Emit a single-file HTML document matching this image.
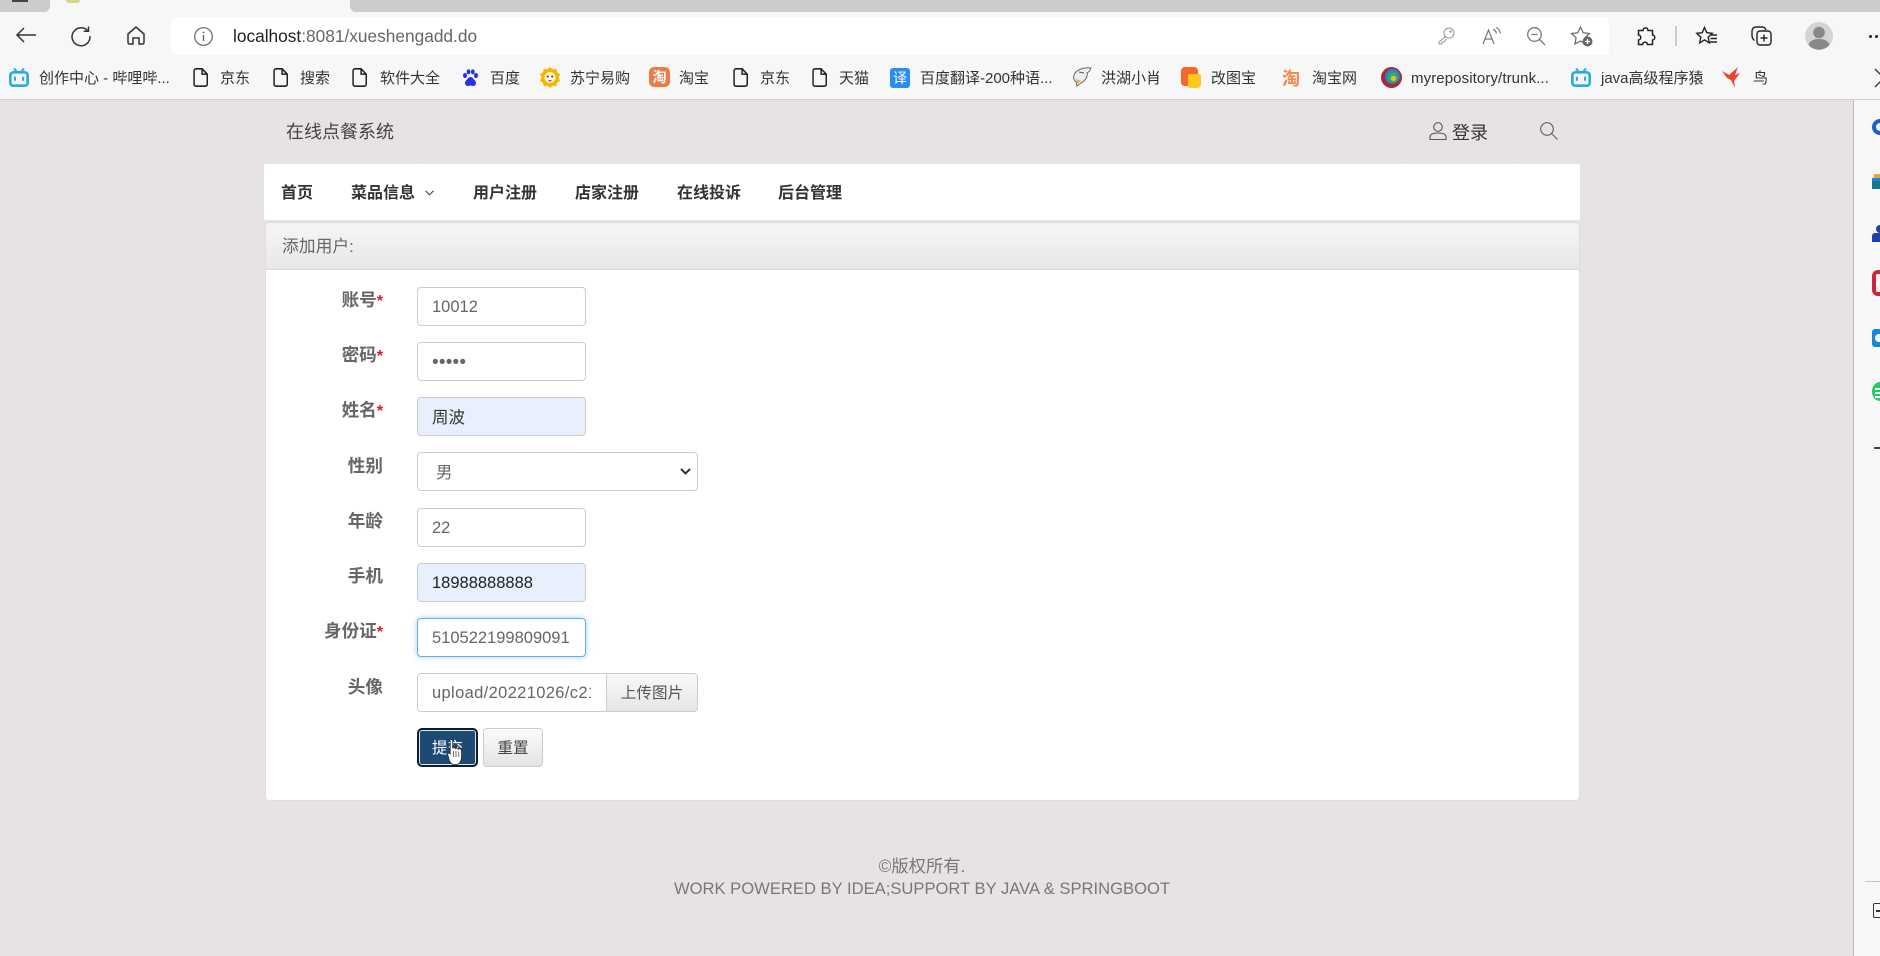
<!DOCTYPE html>
<html lang="zh-CN">
<head>
<meta charset="utf-8">
<title>添加用户</title>
<style>
html,body{margin:0;padding:0}
body{width:1880px;height:956px;overflow:hidden;position:relative;background:#e8e3e3;font-family:"Liberation Sans","Noto Sans CJK SC",sans-serif}
div,span,svg{box-sizing:border-box}
.a{position:absolute}
.t{position:absolute;white-space:nowrap;line-height:24px;height:24px}
.bm{font-size:15px;color:#333;top:67px}
.nav{font-size:16px;font-weight:700;color:#333;top:182px}
.lb{font-size:17.600px;font-weight:700;color:#666;text-align:right;right:1497px}
.lb i{color:#e8112d;font-style:normal;font-size:16px}
.in{position:absolute;left:417px;width:169px;height:39px;background:#fff;border:1px solid #ccc;border-radius:4px;font-size:16.500px;color:#666;line-height:39px;padding-left:14px;white-space:nowrap;overflow:hidden}
.sv{position:absolute;overflow:visible}
</style>
</head>
<body>
<!-- browser chrome -->
<div class="a" style="left:0;top:0;width:1880px;height:100px;background:#f7f7f7;border-bottom:1px solid #d2d0d0"></div>
<div class="a" style="left:350px;top:0;width:1530px;height:12px;background:#ccc;border-bottom-left-radius:6px"></div>
<div class="a" style="left:0;top:0;width:50px;height:12px;background:#ccc;border-bottom-right-radius:6px"></div>
<div class="a" style="left:12px;top:0;width:16px;height:1.500px;background:#444"></div>
<div class="a" style="left:66px;top:0;width:14px;height:3px;background:#d6d68a;border-radius:0 0 6px 6px"></div>
<div class="a" style="left:171px;top:17px;width:1438px;height:38px;background:#fff;border-radius:5px"></div>

<svg class="sv" style="left:16px;top:27px" width="20" height="16" viewBox="0 0 20 16" fill="none" stroke="#333" stroke-width="1.500"><path d="M20 8H1.500M8 1L1 8l7 7"/></svg>
<svg class="sv" style="left:71px;top:26px" width="20" height="20" viewBox="0 0 20 20" fill="none" stroke="#333" stroke-width="1.500"><path d="M16.500 4.500A9 9 0 1 0 19 10"/><path d="M17.500 0.500v4.800h-4.800"/></svg>
<svg class="sv" style="left:127px;top:26px" width="18" height="19" viewBox="0 0 18 19" fill="none" stroke="#333" stroke-width="1.500"><path d="M1 8L9 1l8 7v8.500a1.500 1.500 0 0 1-1.500 1.500H12v-6H6v6H2.500A1.500 1.500 0 0 1 1 16.500z"/></svg>
<svg class="sv" style="left:194px;top:27px" width="19" height="19" viewBox="0 0 19 19" fill="none" stroke="#666" stroke-width="1.200"><circle cx="9.500" cy="9.500" r="8.800"/><path d="M9.500 8v6" stroke-width="1.400"/><circle cx="9.500" cy="5.500" r=".9" fill="#666" stroke="none"/></svg>
<div class="t" style="left:233px;top:24px;font-size:17.300px;color:#222">localhost<span style="color:#666">:8081/xueshengadd.do</span></div>

<svg class="sv" style="left:1438px;top:27px" width="17" height="18" viewBox="0 0 17 18" fill="none" stroke="#999" stroke-width="1.100"><circle cx="11" cy="6" r="5"/><path d="M7.500 9.500L1 15v2h3v-2h2l2.500-3"/><circle cx="12.500" cy="4.500" r=".7" fill="#999"/></svg>
<svg class="sv" style="left:1482px;top:27px" width="20" height="18" viewBox="0 0 20 18" fill="none" stroke="#777" stroke-width="1.200"><path d="M1 17L6.500 3 12 17M3 12h7"/><path d="M11 2.500c2 .5 3 2 3.500 4M14 .5c2.500 1 4 3.500 4.500 6"/></svg>
<svg class="sv" style="left:1527px;top:27px" width="18" height="18" viewBox="0 0 18 18" fill="none" stroke="#777" stroke-width="1.300"><circle cx="7.500" cy="7.500" r="6.800"/><path d="M12.500 12.500L18 18M4.500 7.500h6"/></svg>
<svg class="sv" style="left:1571px;top:26px" width="22" height="21" viewBox="0 0 22 21" fill="none" stroke="#666" stroke-width="1.200"><path d="M9.500 1l2.700 5.700 6.300.8-4.600 4.300 1.200 6.200-5.600-3-5.600 3 1.200-6.200L.5 7.500l6.300-.8z"/><circle cx="16.500" cy="15.500" r="5" fill="#666" stroke="none"/><path d="M16.500 13v5M14 15.500h5" stroke="#fff"/></svg>
<svg class="sv" style="left:1636px;top:26px" width="20" height="20" viewBox="0 0 20 20" fill="none" stroke="#222" stroke-width="1.500"><path d="M7 4.500C7 1 12 1 12 4.500h4.500V9c3 0 3 5 0 5v4.500H11.500c0-3-5-3-5 0H2.500V14C5.500 14 5.500 9 2.500 9V4.500z"/></svg>
<div class="a" style="left:1675px;top:26px;width:2px;height:20px;background:#ccc"></div>
<svg class="sv" style="left:1696px;top:26px" width="22" height="20" viewBox="0 0 22 20" fill="none" stroke="#222" stroke-width="1.400"><path d="M8.500 1.500l2.300 5.200 5.400.6-4 3.800 1.100 5.700-4.800-2.900-4.800 2.900 1.100-5.700-4-3.800 5.400-.6zM15 9h6M14.500 12.500h6.500M14 16h7"/></svg>
<svg class="sv" style="left:1751px;top:26px" width="21" height="20" viewBox="0 0 21 20" fill="none" stroke="#222" stroke-width="1.400"><rect x="6" y="5" width="14" height="14" rx="3"/><path d="M13 8.500v7M9.500 12h7M3.500 14.500C1.500 13 1 11 1 9V5a4 4 0 0 1 4-4h6c2 0 3.500 1 4 3"/></svg>
<svg class="sv" style="left:1805px;top:22px" width="28" height="28" viewBox="0 0 28 28"><circle cx="14" cy="14" r="14" fill="#d4d4d4"/><circle cx="14" cy="10.500" r="5.800" fill="#888"/><path d="M3.500 23c1.500-4.500 5-6 10.500-6s9 1.500 10.500 6a14 14 0 0 1-21 0z" fill="#888"/></svg>
<div class="a" style="left:1869px;top:35px;width:3px;height:3px;border-radius:2px;background:#222"></div>
<div class="a" style="left:1875px;top:35px;width:3px;height:3px;border-radius:2px;background:#222"></div>

<!-- bookmarks -->
<svg class="sv" style="left:9px;top:68px" width="20" height="19" viewBox="0 0 20 19" fill="none" stroke="#23ade5" stroke-width="2.600"><rect x="1.300" y="4.300" width="17.400" height="13.400" rx="3"/><path d="M5 0.500L8 4M15 0.500L12 4" stroke-width="2"/><path d="M6 9.500v2.500M14 9.500v2.500" stroke-linecap="round" stroke-width="2"/></svg>
<div class="t bm" style="left:39px;width:132px;overflow:hidden">创作中心 - 哔哩哔...</div>

<svg class="sv" style="left:193px;top:68px" width="15" height="19" viewBox="0 0 14 17" preserveAspectRatio="none" fill="none" stroke="#222" stroke-width="1.400"><path d="M1 2.500A1.800 1.800 0 0 1 2.800.7H8.500L13.300 5.500V14.500A1.800 1.800 0 0 1 11.500 16.300H2.800A1.800 1.800 0 0 1 1 14.500zM8.500.7V5.500h4.800"/></svg>
<div class="t bm" style="left:220px">京东</div>
<svg class="sv" style="left:273px;top:68px" width="15" height="19" viewBox="0 0 14 17" preserveAspectRatio="none" fill="none" stroke="#222" stroke-width="1.400"><path d="M1 2.500A1.800 1.800 0 0 1 2.800.7H8.500L13.300 5.500V14.500A1.800 1.800 0 0 1 11.500 16.300H2.800A1.800 1.800 0 0 1 1 14.500zM8.500.7V5.500h4.800"/></svg>
<div class="t bm" style="left:300px">搜索</div>
<svg class="sv" style="left:352px;top:68px" width="15" height="19" viewBox="0 0 14 17" preserveAspectRatio="none" fill="none" stroke="#222" stroke-width="1.400"><path d="M1 2.500A1.800 1.800 0 0 1 2.800.7H8.500L13.300 5.500V14.500A1.800 1.800 0 0 1 11.500 16.300H2.800A1.800 1.800 0 0 1 1 14.500zM8.500.7V5.500h4.800"/></svg>
<div class="t bm" style="left:380px">软件大全</div>
<svg class="sv" style="left:462px;top:69px" width="17" height="18" viewBox="0 0 17 18" fill="#2932e1"><ellipse cx="3" cy="6.500" rx="2" ry="2.600"/><ellipse cx="6.500" cy="2.800" rx="1.900" ry="2.600"/><ellipse cx="10.800" cy="2.800" rx="1.900" ry="2.600"/><ellipse cx="14" cy="6.500" rx="2" ry="2.600"/><path d="M8.500 8c-2 0-3 2-4.500 3.500-1.500 1.500-1.500 5.500 2 5.500 1 0 1.500-.5 2.500-.5s1.500.5 2.500.5c3.500 0 3.500-4 2-5.500C11.500 10 10.500 8 8.500 8z"/></svg>
<div class="t bm" style="left:490px">百度</div>
<svg class="sv" style="left:540px;top:67px" width="20" height="21" viewBox="0 0 20 21"><path d="M10 0l2.700 2.500 3.500-.7.800 3.400 3 2-1.500 3.300 1.500 3.300-3 2-.8 3.400-3.500-.7L10 21l-2.700-2.500-3.500.7L3 15.800l-3-2 1.500-3.300L0 7.200l3-2 .8-3.400 3.500.7z" fill="#f9b200"/><circle cx="10" cy="10.500" r="5.500" fill="#fff3d0"/><circle cx="7.800" cy="9.500" r="1" fill="#333"/><circle cx="12.200" cy="9.500" r="1" fill="#333"/><path d="M8 13h4l-2 2z" fill="#a55"/></svg>
<div class="t bm" style="left:570px">苏宁易购</div>
<div class="a" style="left:649px;top:67px;width:21px;height:20px;background:#ee7a44;border-radius:5px;color:#fff;font-size:14px;line-height:20px;text-align:center;font-weight:700">淘</div>
<div class="t bm" style="left:679px">淘宝</div>
<svg class="sv" style="left:733px;top:68px" width="15" height="19" viewBox="0 0 14 17" preserveAspectRatio="none" fill="none" stroke="#222" stroke-width="1.400"><path d="M1 2.500A1.800 1.800 0 0 1 2.800.7H8.500L13.300 5.500V14.500A1.800 1.800 0 0 1 11.500 16.300H2.800A1.800 1.800 0 0 1 1 14.500zM8.500.7V5.500h4.800"/></svg>
<div class="t bm" style="left:760px">京东</div>
<svg class="sv" style="left:812px;top:68px" width="15" height="19" viewBox="0 0 14 17" preserveAspectRatio="none" fill="none" stroke="#222" stroke-width="1.400"><path d="M1 2.500A1.800 1.800 0 0 1 2.800.7H8.500L13.300 5.500V14.500A1.800 1.800 0 0 1 11.500 16.300H2.800A1.800 1.800 0 0 1 1 14.500zM8.500.7V5.500h4.800"/></svg>
<div class="t bm" style="left:839px">天猫</div>
<div class="a" style="left:890px;top:68px;width:20px;height:20px;background:#2b8df2;border-radius:3px;color:#fff;font-size:14px;line-height:20px;text-align:center">译</div>
<div class="t bm" style="left:920px">百度翻译-200种语...</div>
<svg class="sv" style="left:1071px;top:67px" width="21" height="20" viewBox="0 0 21 20"><path d="M3 8C5 3 12 0 20 1c-1 3-2 4-4 5 1 4-2 8-6 10l-4 3c-1-2 0-3-1-4-2-1-3-4-2-7z" fill="#eee" stroke="#666"/><path d="M5 12l5 2-4 3z" fill="#e6b23c"/><path d="M8 5l5 1" stroke="#555"/></svg>
<div class="t bm" style="left:1101px">洪湖小肖</div>
<div class="a" style="left:1181px;top:67px;width:17px;height:19px;background:#f4672c;border-radius:4px"></div>
<div class="a" style="left:1188px;top:74px;width:13px;height:14px;background:#fdc71d;border-radius:2px 2px 4px 2px"></div>
<div class="t bm" style="left:1211px">改图宝</div>
<div class="t" style="left:1282px;top:67px;font-size:18px;font-weight:700;color:#f2874b">淘</div>
<div class="t bm" style="left:1312px">淘宝网</div>
<svg class="sv" style="left:1381px;top:67px" width="21" height="21" viewBox="0 0 21 21"><circle cx="10.500" cy="10.500" r="10.500" fill="#b0243a"/><circle cx="11.500" cy="9.500" r="7.500" fill="#1f88c9"/><circle cx="12" cy="10.500" r="5" fill="#49a84a"/><circle cx="12.500" cy="11.500" r="2.600" fill="#d9c23c"/></svg>
<div class="t bm" style="left:1411px;letter-spacing:.1px">myrepository/trunk...</div>
<svg class="sv" style="left:1571px;top:68px" width="20" height="19" viewBox="0 0 20 19" fill="none" stroke="#23ade5" stroke-width="2.600"><rect x="1.300" y="4.300" width="17.400" height="13.400" rx="3"/><path d="M5 0.500L8 4M15 0.500L12 4" stroke-width="2"/><path d="M6 9.500v2.500M14 9.500v2.500" stroke-linecap="round" stroke-width="2"/></svg>
<div class="t bm" style="left:1601px">java高级程序猿</div>
<svg class="sv" style="left:1722px;top:67px" width="20" height="21" viewBox="0 0 20 21"><path d="M0 4l7 4L16 0l-3 8 5-2-6 8 1 7-4-8-4-2z" fill="#e8452c"/></svg>
<div class="t bm" style="left:1753px">鸟</div>
<svg class="sv" style="left:1875px;top:68px" width="5" height="20" viewBox="0 0 5 20" fill="none" stroke="#333" stroke-width="1.300"><path d="M0 1l9 9-9 9"/></svg>

<!-- right sidebar -->
<div class="a" style="left:1853px;top:100px;width:27px;height:856px;background:#f7f7f7;border-left:1px solid #bbb"></div>
<div class="a" style="left:1872px;top:119px;width:16px;height:16px;border:4px solid #1b5fc9;border-radius:50%"></div>
<div class="a" style="left:1872px;top:180px;width:8px;height:9px;background:#127a8a"></div>
<div class="a" style="left:1874px;top:174px;width:6px;height:6px;background:#e0ab2c"></div>
<div class="a" style="left:1872px;top:178px;width:8px;height:3px;background:#2a80d6"></div>
<div class="a" style="left:1876px;top:225px;width:4px;height:8px;background:#1e3fae;border-radius:4px 0 0 4px"></div>
<div class="a" style="left:1872px;top:233px;width:8px;height:9px;background:#1e3fae;border-radius:3px 0 0 0"></div>
<div class="a" style="left:1872px;top:270px;width:8px;height:26px;border:4px solid #c8273a;border-right:0;border-radius:6px 0 0 6px"></div>
<div class="a" style="left:1872px;top:329px;width:8px;height:18px;background:#1688cf;border-radius:3px 0 0 3px"></div>
<div class="a" style="left:1875px;top:334px;width:5px;height:8px;background:#fff;border-radius:4px 0 0 4px"></div>
<div class="a" style="left:1872px;top:382px;width:16px;height:19px;background:#23cb63;border-radius:50%"></div>
<div class="a" style="left:1875px;top:388px;width:5px;height:1.500px;background:#fff"></div>
<div class="a" style="left:1875px;top:392px;width:5px;height:1.500px;background:#fff"></div>
<div class="a" style="left:1875px;top:396px;width:5px;height:1.500px;background:#fff"></div>
<div class="a" style="left:1874px;top:447px;width:6px;height:1.500px;background:#444"></div>
<div class="a" style="left:1865px;top:881px;width:15px;height:1px;background:#c4c4c4"></div>
<div class="a" style="left:1873px;top:903px;width:12px;height:15px;border:1.500px solid #333;border-radius:2px"></div>
<div class="a" style="left:1876px;top:910px;width:4px;height:1.500px;background:#333"></div>

<!-- site header -->
<div class="a" style="left:418px;top:100px;width:1px;height:64px;background:#e4dfdf"></div>
<div class="a" style="left:1406px;top:100px;width:1px;height:64px;background:#e4dfdf"></div>
<div class="a" style="left:1517px;top:100px;width:1px;height:64px;background:#e4dfdf"></div>
<div class="t" style="left:286px;top:120px;font-size:18px;color:#444">在线点餐系统</div>
<svg class="sv" style="left:1429px;top:122px" width="18" height="18" viewBox="0 0 18 18" fill="none" stroke="#555" stroke-width="1.100"><circle cx="9" cy="5" r="4.300"/><path d="M1 17.500v-2.500c0-2.500 3-4 8-4s8 1.500 8 4v2.500z"/></svg>
<div class="t" style="left:1452px;top:121px;font-size:18px;color:#333">登录</div>
<svg class="sv" style="left:1540px;top:122px" width="18" height="18" viewBox="0 0 18 18" fill="none" stroke="#666" stroke-width="1.200"><circle cx="7" cy="7" r="6.300"/><path d="M11.500 11.500L17.500 17.500"/></svg>

<!-- nav -->
<div class="a" style="left:264px;top:164px;width:1316px;height:56px;background:#fff"></div>
<div class="t nav" style="left:281px">首页</div>
<div class="t nav" style="left:351px">菜品信息</div>
<svg class="sv" style="left:425px;top:190px" width="9" height="6" viewBox="0 0 9 6" fill="none" stroke="#555" stroke-width="1.200"><path d="M.5.800L4.500 4.800 8.500.8"/></svg>
<div class="t nav" style="left:473px">用户注册</div>
<div class="t nav" style="left:575px">店家注册</div>
<div class="t nav" style="left:677px">在线投诉</div>
<div class="t nav" style="left:778px">后台管理</div>

<!-- panel -->
<div class="a" style="left:265px;top:222px;width:1315px;height:579px;background:#fff;border:1px solid #ddd;border-top:0;border-radius:4px"></div>
<div class="a" style="left:265px;top:222px;width:1315px;height:48px;background:linear-gradient(#f5f5f5,#e8e8e8);border:1px solid #ddd;border-radius:4px 4px 0 0"></div>
<div class="t" style="left:282px;top:235px;font-size:16.800px;color:#666">添加用户:</div>

<div class="t lb" style="top:288px">账号<i>*</i></div>
<div class="in" style="top:287px">10012</div>
<div class="t lb" style="top:343px">密码<i>*</i></div>
<div class="in" style="top:342px;font-size:19px;letter-spacing:.2px;line-height:39px">•••••</div>
<div class="t lb" style="top:398px">姓名<i>*</i></div>
<div class="in" style="top:397px;background:#e8f0fe;color:#333;line-height:41px">周波</div>
<div class="t lb" style="top:454px">性别</div>
<div class="in" style="top:452px;width:281px;padding-left:18px;line-height:41px">男</div>
<svg class="sv" style="left:680px;top:468px" width="11" height="7" viewBox="0 0 11 7" fill="none" stroke="#333" stroke-width="2"><path d="M1 1l4.500 4.500L10 1"/></svg>
<div class="t lb" style="top:509px">年龄</div>
<div class="in" style="top:508px">22</div>
<div class="t lb" style="top:564px">手机</div>
<div class="in" style="top:563px;background:#e8f0fe;color:#222">18988888888</div>
<div class="t lb" style="top:619px">身份证<i>*</i></div>
<div class="in" style="top:618px;border-color:#66afe9;box-shadow:0 0 6px rgba(102,175,233,.6)">510522199809091</div>
<div class="t lb" style="top:675px">头像</div>
<div class="in" style="top:673px;width:190px;border-radius:4px 0 0 4px;padding-right:14px;background:#fff;letter-spacing:.35px"><span style="display:block;width:159px;overflow:hidden">upload/20221026/c21a</span></div>
<div class="a" style="left:606px;top:673px;width:92px;height:39px;background:linear-gradient(#f8f8f8,#e6e6e6);border:1px solid #ccc;border-radius:0 4px 4px 0;text-align:center;font-size:15.600px;line-height:39px;color:#555">上传图片</div>

<div class="a" style="left:417px;top:728px;width:61px;height:39px;border-radius:5px;background:#1c4a73;border:2px solid #0e1d2b;box-shadow:inset 0 0 0 1px #dfe8ef;text-align:center;color:#fff;font-size:15.600px;line-height:37px">提交</div>
<svg class="sv" style="left:447px;top:738px" width="17" height="27" viewBox="0 0 17 27"><path d="M4 1.500c1 0 1.700.7 1.700 1.700v7c.5-1 2.800-.8 3 .4.700-.9 2.700-.6 3 .6.700-.7 2.800-.3 2.800 1.300v6.500c0 3.500-1.500 7-5 7.500-3.500.5-6-1-7-3.500L.8 17c-.7-1.500 1-2.500 2.400-1.200V3.200C2.300 2.200 3 1.500 4 1.500z" fill="#fff" stroke="#222" stroke-width=".8"/><path d="M6.500 13v6M9 13v6M11.800 13.500v5.500" stroke="#333" stroke-width=".7"/></svg>
<div class="a" style="left:483px;top:728px;width:60px;height:39px;border-radius:4px;background:linear-gradient(#fbfbfb,#e4e4e4);border:1px solid #ccc;text-align:center;color:#444;font-size:15.600px;line-height:39px">重置</div>

<!-- footer -->
<div class="t" style="left:0;width:1844px;top:854px;text-align:center;font-size:17.300px;color:#777">©版权所有.</div>
<div class="t" style="left:0;width:1844px;top:877px;text-align:center;font-size:16.600px;color:#777">WORK POWERED BY IDEA;SUPPORT BY JAVA &amp; SPRINGBOOT</div>
</body>
</html>
